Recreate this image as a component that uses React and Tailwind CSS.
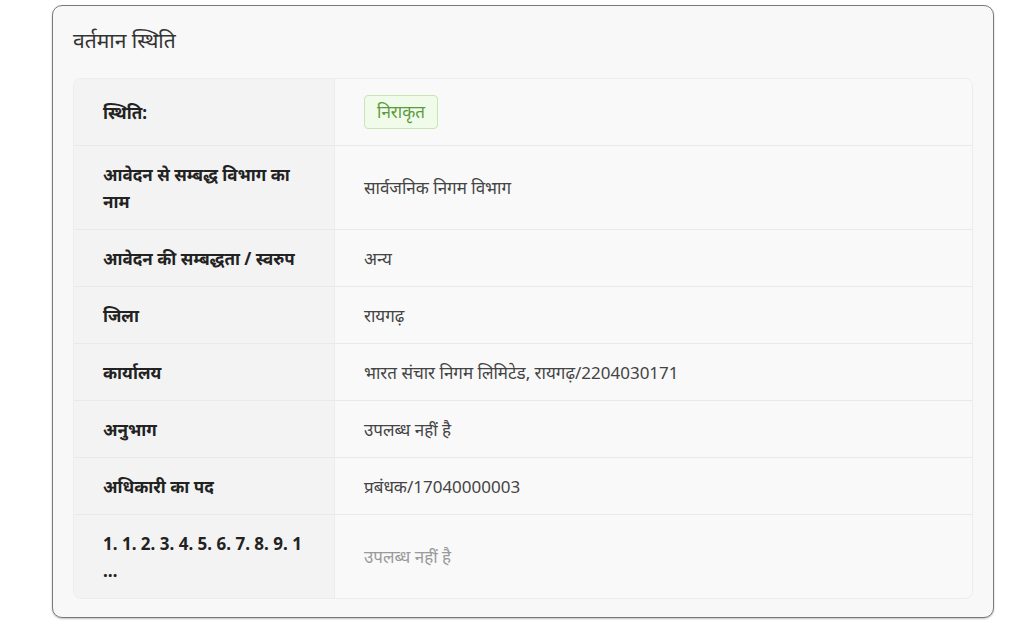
import React from 'react';

const rows = [
  { label: 'स्थिति:', badge: 'निराकृत' },
  { label: 'आवेदन से सम्बद्ध विभाग का नाम', value: 'सार्वजनिक निगम विभाग' },
  { label: 'आवेदन की सम्बद्धता / स्वरुप', value: 'अन्य' },
  { label: 'जिला', value: 'रायगढ़' },
  { label: 'कार्यालय', value: 'भारत संचार निगम लिमिटेड, रायगढ़/2204030171' },
  { label: 'अनुभाग', value: 'उपलब्ध नहीं है' },
  { label: 'अधिकारी का पद', value: 'प्रबंधक/17040000003' },
  { label: '1. 1. 2. 3. 4. 5. 6. 7. 8. 9. 1 …', value: 'उपलब्ध नहीं है', muted: true },
];

const App = () => {
  return (
    <div
      className="w-[1024px] h-[637px] bg-white pl-[52px] pt-[5px]"
      style={{ fontFamily: '"Noto Sans", "Noto Sans Devanagari", sans-serif' }}
    >
      <div className="w-[942px] bg-[#f8f8f8] border-[1.5px] border-[#7a7a7a] rounded-[10px] shadow-[0_1px_2px_rgba(0,0,0,0.25)] px-[20px] pb-[18px]">
        <h2 className="pt-[19px] h-[72px] text-[21px] leading-[30px] text-[#333]">वर्तमान स्थिति</h2>
        <div className="w-[900px] border border-[#ececec] rounded-[8px] overflow-hidden">
          {rows.map((row, i) => (
            <div
              key={i}
              className={`flex ${i > 0 ? 'border-t border-[#e9e9e9]' : ''}`}
            >
              <div className="w-[261px] shrink-0 bg-[#f3f3f3] border-r border-[#ececec] pl-[29px] pr-[30px] py-[14.5px] flex items-center">
                <span className="text-[17px] leading-[27px] font-bold text-[#222]">
                  {i === 7 ? (
                    <>
                      1. 1. 2. 3. 4. 5. 6. 7. 8. 9. 1
                      <br />
                      …
                    </>
                  ) : (
                    row.label
                  )}
                </span>
              </div>
              <div
                className={`flex-1 bg-[#f9f9f9] pl-[29px] flex items-center ${
                  row.badge ? 'py-[16px]' : 'py-[14.5px]'
                }`}
              >
                {row.badge ? (
                  <span className="inline-flex items-center h-[34px] px-[12px] border border-[#c8e6b4] bg-[#f1fbea] rounded-[4px] text-[17px] text-[#5a9a3c]">
                    {row.badge}
                  </span>
                ) : (
                  <span className={`text-[17px] leading-[27px] ${row.muted ? 'text-[#9a9a9a]' : 'text-[#444]'}`}>
                    {row.value}
                  </span>
                )}
              </div>
            </div>
          ))}
        </div>
      </div>
    </div>
  );
};

export default App;
